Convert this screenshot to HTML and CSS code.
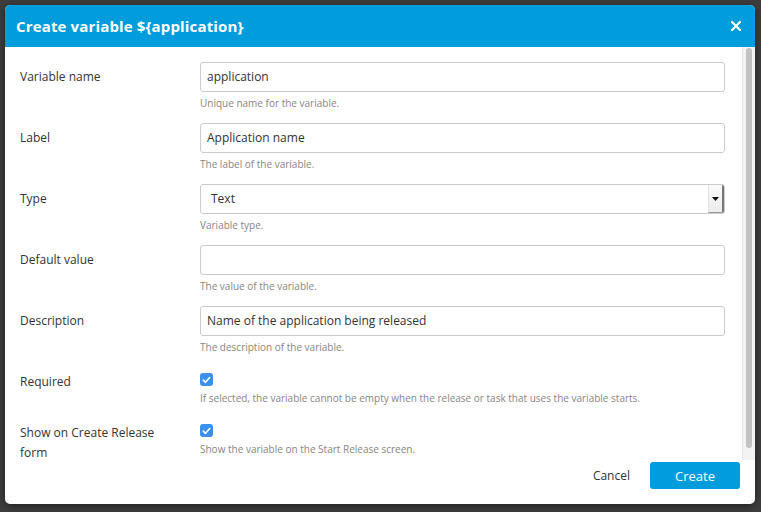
FILE: index.html
```html
<!DOCTYPE html>
<html>
<head>
<meta charset="utf-8">
<link rel="stylesheet" href="styles.css">
</head>
<body>
<div class="dialog">
  <div class="header">
    <h1 class="title">Create variable ${application}</h1>
    <span class="close"><svg width="10" height="10" viewBox="0 0 10 10"><path d="M1 1L9 9M9 1L1 9" stroke="#fff" stroke-width="2.2" stroke-linecap="square"/></svg></span>
  </div>
  <div class="body">
    <div class="form">
      <div class="row">
        <label class="label">Variable name</label>
        <div class="field">
          <input class="input" type="text" value="application">
          <div class="help">Unique name for the variable.</div>
        </div>
      </div>
      <div class="row">
        <label class="label">Label</label>
        <div class="field">
          <input class="input" type="text" value="Application name">
          <div class="help">The label of the variable.</div>
        </div>
      </div>
      <div class="row">
        <label class="label">Type</label>
        <div class="field">
          <div class="select"><span class="select-text">Text</span><span class="select-arrow"><svg width="7" height="4" viewBox="0 0 7 4"><path d="M0 0H7L3.5 4Z" fill="#111"/></svg></span></div>
          <div class="help">Variable type.</div>
        </div>
      </div>
      <div class="row">
        <label class="label">Default value</label>
        <div class="field">
          <input class="input" type="text" value="">
          <div class="help">The value of the variable.</div>
        </div>
      </div>
      <div class="row">
        <label class="label">Description</label>
        <div class="field">
          <input class="input" type="text" value="Name of the application being released">
          <div class="help">The description of the variable.</div>
        </div>
      </div>
      <div class="row check-row">
        <label class="label">Required</label>
        <div class="field">
          <span class="checkbox"><svg width="9" height="8" viewBox="0 0 9 8"><path d="M1.3 4.2L3.5 6.3L7.7 1.5" fill="none" stroke="#fff" stroke-width="1.6" stroke-linecap="round" stroke-linejoin="round"/></svg></span>
          <div class="help help-check">If selected, the variable cannot be empty when the release or task that uses the variable starts.</div>
        </div>
      </div>
      <div class="row check-row">
        <label class="label">Show on Create Release form</label>
        <div class="field">
          <span class="checkbox"><svg width="9" height="8" viewBox="0 0 9 8"><path d="M1.3 4.2L3.5 6.3L7.7 1.5" fill="none" stroke="#fff" stroke-width="1.6" stroke-linecap="round" stroke-linejoin="round"/></svg></span>
          <div class="help help-check">Show the variable on the Start Release screen.</div>
        </div>
      </div>
    </div>
    <div class="scrollbar"><div class="thumb"></div></div>
  </div>
  <div class="footer">
    <button class="btn-cancel">Cancel</button>
    <button class="btn-create">Create</button>
  </div>
</div>
</body>
</html>
```
FILE: styles.css
```css
html, body {
  margin: 0;
  height: 100%;
}
body {
  background: #3e3e3e;
  padding: 5px 6px 8px 5px;
  box-sizing: border-box;
  font-family: "Open Sans", "Liberation Sans", sans-serif;
  color: #333;
}
.dialog {
  width: 750px;
  height: 499px;
  background: #fff;
  border-radius: 5px;
  overflow: hidden;
  display: flex;
  flex-direction: column;
  box-shadow: 0 2px 8px rgba(0,0,0,0.5);
}
.header {
  height: 42px;
  flex: none;
  background: #009cdb;
  display: flex;
  align-items: center;
  justify-content: space-between;
  padding: 0 14px 0 11px;
}
.title {
  margin: 0;
  font-size: 15px;
  font-weight: 700;
  letter-spacing: 0.15px;
  color: #fff;
}
.close {
  display: flex;
  width: 10px;
  height: 10px;
}
.body {
  flex: 1;
  min-height: 0;
  overflow: hidden;
  display: flex;
}
.form {
  flex: 1;
  min-width: 0;
  padding: 15px 17px 0 15px;
}
.scrollbar {
  flex: none;
  width: 13px;
  background: #f3f3f3;
  border-left: 1px solid #e6e6e6;
  padding: 1px 3px 12px 3px;
  box-sizing: border-box;
  display: flex;
}
.thumb {
  flex: 1;
  background: #c2c2c2;
  border-radius: 4px;
}
.row {
  display: grid;
  grid-template-columns: 180px 1fr;
  margin-bottom: 13px;
}
.label {
  font-size: 12px;
  line-height: 20px;
  padding-top: 5px;
  color: #333;
  padding-right: 22px;
}
.check-row .label {
  padding-top: 5px;
}
.field {
  display: flex;
  flex-direction: column;
  align-items: flex-start;
}
.input {
  box-sizing: border-box;
  width: 100%;
  height: 30px;
  border: 1px solid #ccc;
  border-radius: 3px;
  padding: 0 6px 1px;
  font-family: "Open Sans", "Liberation Sans", sans-serif;
  font-size: 12px;
  color: #333;
  outline: none;
  margin: 0;
}
.select {
  box-sizing: border-box;
  width: 100%;
  height: 30px;
  border: 1px solid #ccc;
  border-radius: 3px;
  display: flex;
  align-items: stretch;
  overflow: hidden;
}
.select-text {
  flex: 1;
  font-size: 12px;
  line-height: 27px;
  padding-left: 10px;
}
.select-arrow {
  width: 13px;
  background: linear-gradient(#fafafa, #ececec);
  border-left: 1px solid #e2e2e2;
  border-right: 2px solid #777;
  border-bottom: 1px solid #999;
  display: flex;
  align-items: center;
  justify-content: center;
}
.help {
  font-size: 10px;
  line-height: 14px;
  color: #8a8583;
  margin-top: 4px;
}
.checkbox {
  width: 13px;
  height: 13px;
  border-radius: 3px;
  background: #3d8fec;
  display: flex;
  align-items: center;
  justify-content: center;
  margin-top: 6px;
}
.help-check {
  margin-top: 5px;
}
.footer {
  flex: none;
  height: 44px;
  box-sizing: border-box;
  padding: 2px 15px 0 0;
  display: flex;
  justify-content: flex-end;
  align-items: flex-start;
  gap: 8px;
}
.btn-cancel {
  height: 27px;
  border: none;
  background: none;
  font-family: "Open Sans", "Liberation Sans", sans-serif;
  font-size: 12px;
  color: #333;
  padding: 0 12px;
}
.btn-create {
  width: 90px;
  height: 27px;
  border: none;
  border-radius: 3px;
  background: #009cdb;
  color: #fff;
  font-family: "Open Sans", "Liberation Sans", sans-serif;
  font-size: 13px;
  padding: 0;
}
```
